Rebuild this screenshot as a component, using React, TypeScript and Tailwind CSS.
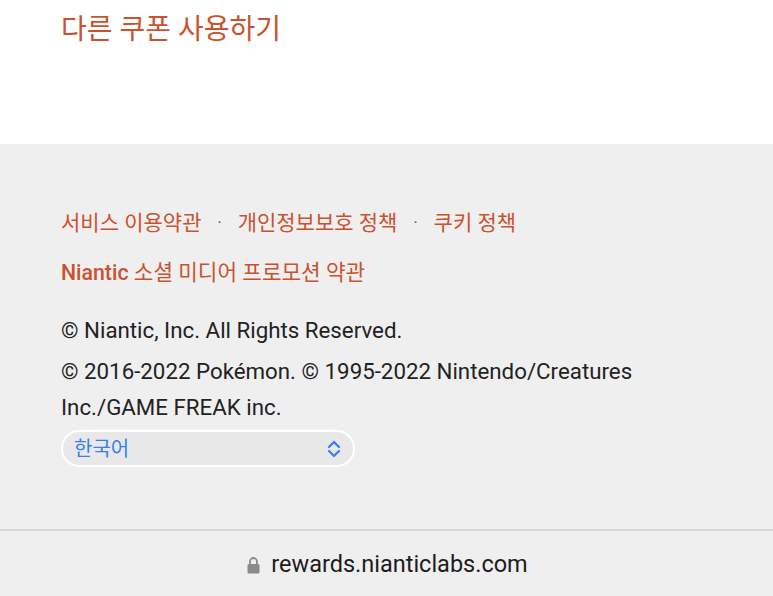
import React from "react";

const font = { fontFamily: 'Roboto, "Noto Sans CJK KR", sans-serif' };

export default function App() {
  return (
    <div
      className="w-[773px] h-[596px] overflow-hidden flex flex-col bg-[#efefef]"
      style={font}
    >
      <div className="bg-white h-[144px] shrink-0 pl-[61px] pt-[10px]">
        <div className="text-[28px] leading-[40px] text-[#c9532f]">다른 쿠폰 사용하기</div>
      </div>
      <div className="flex-1 bg-[#efefef] px-[61px] pt-[63px]">
        <div className="flex items-center text-[21px] leading-[32px] text-[#c9532f]">
          <span>서비스 이용약관</span>
          <span className="mx-[16px] text-[#555] text-[16px]">·</span>
          <span>개인정보보호 정책</span>
          <span className="mx-[16px] text-[#555] text-[16px]">·</span>
          <span>쿠키 정책</span>
        </div>
        <div className="mt-[18px] text-[21.3px] leading-[32px] text-[#c9532f]">
          <span className="font-medium">Niantic</span> 소셜 미디어 프로모션 약관
        </div>
        <div className="mt-[23px] text-[22.3px] leading-[36px] text-[#222]">
          © Niantic, Inc. All Rights Reserved.
        </div>
        <div className="mt-[5px] text-[22.3px] leading-[36px] text-[#222]">
          © 2016-2022 Pokémon. © 1995-2022 Nintendo/Creatures
          <br />
          Inc./GAME FREAK inc.
        </div>
        <div className="mt-[5px] w-[294px] h-[37px] rounded-full border-2 border-white bg-[#e8e8e8] flex items-center justify-between pl-[11px] pr-[12px]">
          <span className="text-[20px] text-[#3a7ef0]">한국어</span>
          <svg width="14" height="18" viewBox="0 0 14 18" fill="none">
            <path d="M2 7 L7 2 L12 7" stroke="#3a7ef0" strokeWidth="2.2" strokeLinecap="round" strokeLinejoin="round" />
            <path d="M2 11 L7 16 L12 11" stroke="#3a7ef0" strokeWidth="2.2" strokeLinecap="round" strokeLinejoin="round" />
          </svg>
        </div>
      </div>
      <div className="h-[67px] shrink-0 border-t-2 border-[#d8d8d8] bg-[#efefef] flex items-center justify-center gap-[11px] pt-[3px] pl-[2px]">
        <svg width="13" height="17" viewBox="0 0 13 17">
          <path d="M3 7 V4.5 a3.5 3.5 0 0 1 7 0 V7" stroke="#8a8a8a" strokeWidth="1.8" fill="none" />
          <rect x="0.5" y="7" width="12" height="9.5" rx="1.5" fill="#8a8a8a" />
        </svg>
        <span className="text-[23.5px] text-[#1c1c1c]">rewards.nianticlabs.com</span>
      </div>
    </div>
  );
}
